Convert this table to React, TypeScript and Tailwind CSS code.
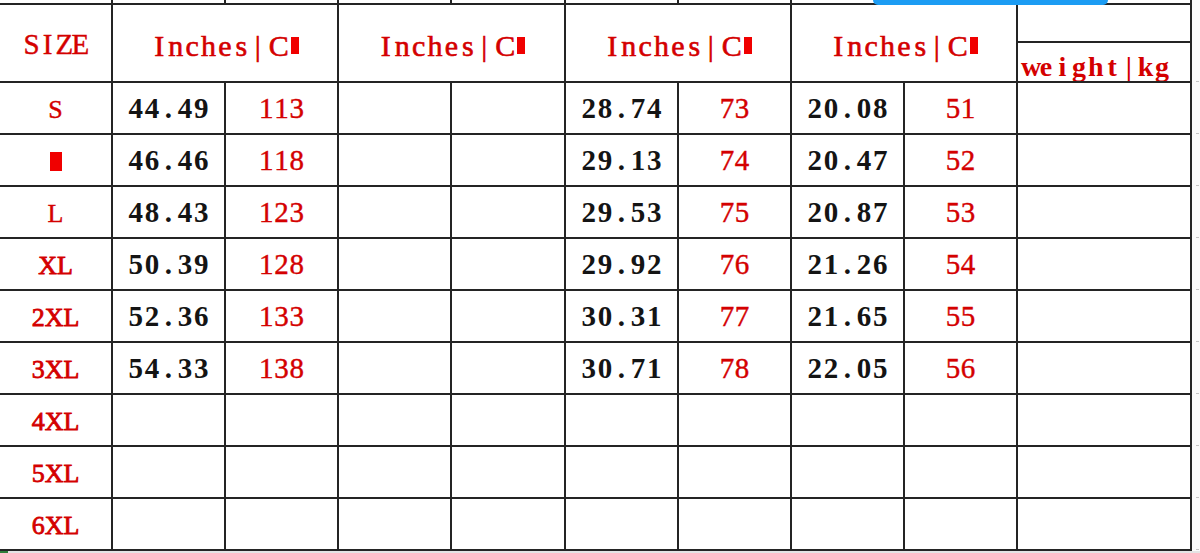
import React from "react";

const RED = "text-[#d40000]";
const BLACK = "text-[#141414]";
const STROKE_S = "[-webkit-text-stroke:0.4px_currentColor]";
const STROKE_M = "[-webkit-text-stroke:0.6px_currentColor]";
const STROKE_L = "[-webkit-text-stroke:0.8px_currentColor]";

function Mono({ t, w, className = "" }: { t: string; w: string; className?: string }) {
  return (
    <span className={`inline-flex items-baseline ${className}`}>
      {t.split("").map((c, i) => (
        <span key={i} className={`inline-block ${w} text-center`}>
          {c}
        </span>
      ))}
    </span>
  );
}

function InchesCM() {
  return (
    <span className="inline-flex items-baseline">
      <Mono t="Inches|" w="w-[16.4px]" />
      <span className="ml-[3px]">C</span>
      <span className="inline-block w-[8px] h-[17px] bg-[#f00000] ml-[2px] self-center mt-[1px]" />
    </span>
  );
}

const line = "border-[#242424]";
const cell = `border-r-2 border-b-2 ${line} flex items-center justify-center`;

type Row = { size: string; v: string[] };

const rows: Row[] = [
  { size: "S", v: ["44.49", "113", "", "", "28.74", "73", "20.08", "51"] },
  { size: "M", v: ["46.46", "118", "", "", "29.13", "74", "20.47", "52"] },
  { size: "L", v: ["48.43", "123", "", "", "29.53", "75", "20.87", "53"] },
  { size: "XL", v: ["50.39", "128", "", "", "29.92", "76", "21.26", "54"] },
  { size: "2XL", v: ["52.36", "133", "", "", "30.31", "77", "21.65", "55"] },
  { size: "3XL", v: ["54.33", "138", "", "", "30.71", "78", "22.05", "56"] },
  { size: "4XL", v: ["", "", "", "", "", "", "", ""] },
  { size: "5XL", v: ["", "", "", "", "", "", "", ""] },
  { size: "6XL", v: ["", "", "", "", "", "", "", ""] },
];

const COLS =
  "grid grid-cols-[113px_113px_113px_113px_114px_113px_113px_113px_113px_174px]";

export default function App() {
  return (
    <div className="relative w-[1200px] h-[553px] overflow-hidden bg-white font-['Liberation_Serif','Noto_Sans_CJK_SC',serif]">
      <div className="flex">
        <div className="w-[1192px]">
          {/* top strip continuing the grid above */}
          <div className={`${COLS} h-[3px]`}>
            {Array.from({ length: 10 }).map((_, i) => (
              <div key={i} className={`border-r-2 ${line}`} />
            ))}
          </div>
          <div className={`${COLS} grid-rows-[38px_40px_repeat(9,52px)] border-t-2 ${line}`}>
            {/* header */}
            <div className={`${cell} row-span-2 text-[29px] ${RED} ${STROKE_S} pt-[4px]`}>
              <Mono t="SIZE" w="w-[16px]" />
            </div>
            {[0, 1, 2, 3].map((i) => (
              <div key={i} className={`${cell} col-span-2 row-span-2 text-[30px] ${RED} ${STROKE_M} pt-[4px]`}>
                <InchesCM />
              </div>
            ))}
            <div className={`border-r-2 border-b-2 ${line}`} />
            <div className={`border-r-2 border-b-2 ${line} overflow-hidden pl-[3px] pt-[10px] leading-none text-[28px] font-bold ${RED}`}>
              <Mono t="weight|kg" w="w-[16.6px]" />
            </div>
            {/* body */}
            {rows.map((r, ri) => (
              <React.Fragment key={ri}>
                <div className={`${cell} text-[26px] ${RED} ${ri >= 3 ? STROKE_L : STROKE_S} pt-[2px]`}>
                  {r.size === "M" ? (
                    <span className="inline-block w-[12px] h-[19px] bg-[#f00000] mt-[1px]" />
                  ) : (
                    <span>{r.size}</span>
                  )}
                </div>
                {r.v.map((v, vi) => (
                  <div
                    key={vi}
                    className={`${cell} text-[29px] pt-[2px] ${vi % 2 === 0 ? `${BLACK} font-bold` : `${RED} ${STROKE_S}`}`}
                  >
                    {v && <Mono t={v} w={vi % 2 === 0 ? "w-[16.4px]" : "w-[15.2px]"} />}
                  </div>
                ))}
                <div className={`border-r-2 border-b-2 ${line}`} />
              </React.Fragment>
            ))}
          </div>
        </div>
        {/* right edge strip */}
        <div className="w-[8px] flex flex-col bg-[#fafafa]">
          <div className="h-[43px]" />
          {Array.from({ length: 10 }).map((_, i) => (
            <div key={i} className={`${i === 0 ? "h-[40px]" : "h-[52px]"} flex flex-col justify-end`}>
              <div className="ml-[4px] w-[3px] h-[1px] bg-[#c4c4c4] mb-[1px]" />
            </div>
          ))}
        </div>
      </div>
      <div className="flex h-[2px] bg-[#e4e4e4]">
        <div className="w-[8px] bg-[#2f7d3a]" />
      </div>
      {/* blue pill overlay at top */}
      <div className="absolute left-[873px] top-0 w-[235px] h-[5px] rounded-b-full bg-[#1c9cf3]" />
    </div>
  );
}
